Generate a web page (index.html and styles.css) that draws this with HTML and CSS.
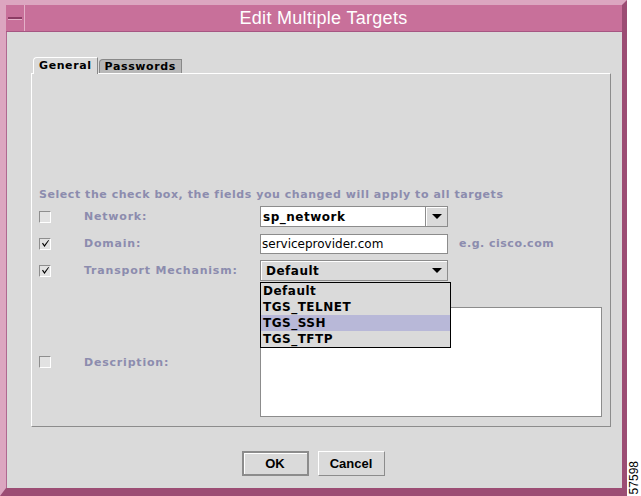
FILE: index.html
```html
<!DOCTYPE html>
<html lang="en">
<head>
    <meta charset="UTF-8">
    <title>Edit Multiple Targets</title>
    <link rel="stylesheet" href="styles.css">
</head>
<body>
    <div class="screen">
        <!-- Dialog window -->
        <div class="window">
            <div class="titlebar">
                <div class="menu-btn"><span></span></div>
                <div class="title">Edit Multiple Targets</div>
            </div>

            <div class="client">
                <div class="tabs">
                    <div class="tab active">General</div>
                    <div class="tab">Passwords</div>
                </div>

                <div class="panel">
                    <p class="hint">Select the check box, the fields you changed will apply to all targets</p>

                    <div class="form">
                        <span class="check"></span>
                        <label class="label">Network:</label>
                        <div class="combo editable">
                            <span class="combo-text">sp_network</span>
                            <span class="arrow-btn"><i class="arrow"></i></span>
                        </div>
                        <span></span>

                        <span class="check checked">
                            <svg viewBox="0 0 9 9" width="9" height="9"><path d="M1 4.5 L3.5 8 L8 1.5 L7.4 1 L3.4 6 L2 3.8 Z" fill="#000"/></svg>
                        </span>
                        <label class="label">Domain:</label>
                        <div class="textfield">serviceprovider.com</div>
                        <span class="example">e.g. cisco.com</span>

                        <span class="check checked">
                            <svg viewBox="0 0 9 9" width="9" height="9"><path d="M1 4.5 L3.5 8 L8 1.5 L7.4 1 L3.4 6 L2 3.8 Z" fill="#000"/></svg>
                        </span>
                        <label class="label">Transport Mechanism:</label>
                        <div class="combo plain">
                            <span class="combo-text">Default</span>
                            <i class="arrow"></i>
                            <!-- open dropdown list -->
                            <ul class="dropdown">
                                <li>Default</li>
                                <li>TGS_TELNET</li>
                                <li class="selected">TGS_SSH</li>
                                <li>TGS_TFTP</li>
                            </ul>
                        </div>
                        <span></span>

                        <span class="check desc"></span>
                        <label class="label desc">Description:</label>
                        <div class="textarea desc"></div>
                    </div>
                </div>

                <div class="buttons">
                    <button class="btn default">OK</button>
                    <button class="btn">Cancel</button>
                </div>
            </div>
        </div>

        <div class="side"><span class="fig">57598</span></div>
    </div>
</body>
</html>
```

FILE: styles.css
```css
/* Page */
body {
    margin: 0;
    padding: 0;
    background: #fff;
    font-family: "DejaVu Sans", sans-serif;
}

.screen {
    display: flex;
    width: 641px;
    height: 496px;
    background: #fff;
}

/* Window frame */
.window {
    box-sizing: border-box;
    width: 627px;
    height: 496px;
    display: flex;
    flex-direction: column;
    background: #d6a0bb;
    border-style: solid;
    border-width: 5px 5px 8px 6px;
    border-color: #dca6c0 #9c4d74 #9c4d74 #dca6c0;
    box-shadow: inset 0 0 0 1px #b86a90;
}

.titlebar {
    height: 26px;
    display: flex;
    background: #c8709a;
    border-bottom: 1px solid #a65682;
}

.menu-btn {
    width: 18px;
    display: flex;
    align-items: center;
    justify-content: center;
    border-right: 1px solid #e4b0c8;
}

.menu-btn span {
    width: 14px;
    height: 2px;
    background: #8c3c64;
    border-bottom: 1px solid #e4b0c8;
}

.title {
    flex: 1;
    text-align: center;
    color: #fff;
    font-family: "Liberation Sans", Arial, sans-serif;
    font-size: 18px;
    line-height: 26px;
    letter-spacing: 0.3px;
}

/* Dialog body */
.client {
    flex: 1;
    background: #dadada;
    padding: 25px 10px 0 24px;
    border-left: 1px solid #b06890;
}

.tabs {
    display: flex;
    margin-left: 2px;
    height: 16px;
    align-items: flex-end;
}

.tab {
    font-size: 11px;
    font-weight: bold;
    color: #000;
    padding: 0 5px;
    line-height: 13px;
    border: 1px solid #888;
    border-bottom: none;
    border-top-left-radius: 4px;
    background: #b8b8b8;
    margin-right: 1px;
    letter-spacing: 0.6px;
}

.tab.active {
    background: #dadada;
    border-color: #fff;
    border-right-color: #888;
    line-height: 15px;
    position: relative;
    z-index: 1;
    margin-bottom: -1px;
    padding-bottom: 1px;
}

.panel {
    box-sizing: border-box;
    width: 580px;
    height: 354px;
    border: 1px solid #fff;
    border-right-color: #8c8c8c;
    border-bottom-color: #8c8c8c;
    padding: 0 7px 9px 7px;
}

.hint {
    margin: 114px 0 4px;
    font-size: 11px;
    line-height: 14px;
    font-weight: bold;
    color: #8c8cae;
    letter-spacing: 0.55px;
}

/* Form grid */
.form {
    display: grid;
    grid-template-columns: 45px 176px 188px 1fr;
    grid-template-rows: 21px 21px 21px 14px 110px;
    row-gap: 6px;
    align-items: center;
}

.desc {
    grid-row: 5;
}

.label {
    font-size: 11px;
    font-weight: bold;
    color: #8c8cae;
    letter-spacing: 0.8px;
}

.example {
    font-size: 11px;
    font-weight: bold;
    color: #8c8cae;
    margin-left: 11px;
    letter-spacing: 0.5px;
}

.check {
    box-sizing: border-box;
    width: 12px;
    height: 12px;
    background: #e2e2e2;
    border: 1px solid #8e8e8e;
    border-right-color: #fff;
    border-bottom-color: #fff;
    display: flex;
    align-items: center;
    justify-content: center;
}

.form .textarea {
    grid-column: 3 / 5;
    height: 110px;
    box-sizing: border-box;
    background: #fff;
    border: 1px solid #8c8c8c;
    margin-right: 1px;
}

/* Combo boxes & text fields */
.combo {
    position: relative;
    box-sizing: border-box;
    height: 21px;
    display: flex;
    align-items: center;
    border: 1px solid #8c8c8c;
}

.combo-text {
    font-size: 12px;
    font-weight: bold;
    letter-spacing: 0.5px;
    color: #000;
}

.combo.editable {
    background: #fff;
}

.combo.editable .combo-text {
    flex: 1;
    padding-left: 2px;
}

.arrow-btn {
    box-sizing: border-box;
    width: 22px;
    height: 19px;
    background: #dadada;
    border-left: 1px solid #8c8c8c;
    box-shadow: inset 1px 1px 0 #fff;
    display: flex;
    align-items: center;
    justify-content: center;
}

.arrow {
    width: 0;
    height: 0;
    border-left: 5px solid transparent;
    border-right: 5px solid transparent;
    border-top: 5px solid #000;
}

.combo.plain {
    background: #dadada;
    box-shadow: inset 1px 1px 0 #fff;
    padding: 0 5px 0 5px;
    justify-content: space-between;
}

.textfield {
    box-sizing: border-box;
    height: 20px;
    background: #fff;
    border: 1px solid #8c8c8c;
    font-size: 12px;
    line-height: 18px;
    padding-left: 1px;
    color: #000;
}

.dropdown {
    position: absolute;
    top: 21px;
    left: -1px;
    width: 191px;
    box-sizing: border-box;
    margin: 0;
    padding: 0;
    list-style: none;
    background: #dadada;
    border: 1px solid #000;
    z-index: 5;
}

.dropdown li {
    height: 16px;
    line-height: 16px;
    padding-left: 2px;
    font-size: 12px;
    font-weight: bold;
    letter-spacing: 0.5px;
    color: #000;
}

.dropdown li.selected {
    background: #b8b8d8;
}

/* Buttons */
.buttons {
    display: flex;
    justify-content: center;
    gap: 9px;
    margin-top: 24px;
    padding-right: 17px;
}

.btn {
    box-sizing: border-box;
    height: 25px;
    width: 67px;
    background: #dadada;
    border: 1px solid #fff;
    border-right-color: #8c8c8c;
    border-bottom-color: #8c8c8c;
    font-family: "Liberation Sans Narrow", "Liberation Sans", sans-serif;
    font-weight: bold;
    font-size: 13px;
    color: #000;
    padding: 0;
}

.btn.default {
    border: 2px solid #8c8c8c;
    box-shadow: inset 1px 1px 0 #fff;
}

/* Figure number */
.side {
    flex: 1;
    display: flex;
    align-items: flex-end;
    justify-content: center;
    padding-bottom: 2px;
}

.fig {
    writing-mode: vertical-rl;
    transform: rotate(180deg);
    font-family: "Liberation Sans", Arial, sans-serif;
    font-size: 12px;
    color: #000;
}
```
